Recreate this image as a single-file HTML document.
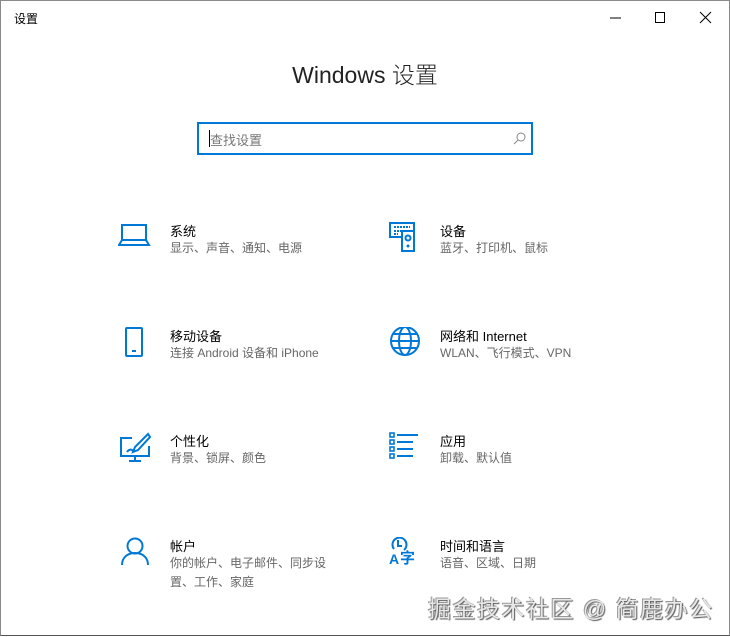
<!DOCTYPE html>
<html><head><meta charset="utf-8"><style>
*{margin:0;padding:0;box-sizing:border-box}
body{width:730px;height:637px;background:#fff;font-family:"Liberation Sans","Noto Sans CJK SC",sans-serif;position:relative;overflow:hidden}
.win{position:absolute;left:0;top:0;width:730px;height:636px;border:1px solid #8a8a8a;border-bottom-color:#555}
.t{position:absolute;font-size:12px;color:#000}
.h{position:absolute;left:0;width:730px;top:56px;text-align:center;font-size:23px;color:#222;font-weight:300}
.s{position:absolute;left:197px;top:122px;width:336px;height:33px;border:2px solid #0078d7}
.s span{position:absolute;left:11px;top:6px;font-size:13px;color:#777}
.s i{position:absolute;left:10px;top:6px;width:1px;height:17px;background:#000}
.it{position:absolute}
.it b{position:absolute;left:52px;top:-1px;font-weight:normal;font-size:13px;color:#000;white-space:nowrap}
.it p{position:absolute;left:52px;top:17px;font-size:12px;color:#666;line-height:19px;width:180px}
svg{position:absolute;left:0;top:0}
.wm{position:absolute;left:428px;top:590px;font-size:23px;color:#e8e8e8;text-shadow:1px 1px 1px #555,-1px -1px 0 #999;letter-spacing:1.5px;white-space:nowrap}
</style></head><body>
<div class="win"></div>
<div class="t" style="left:14px;top:10px">设置</div>
<svg style="left:600px;top:10px" width="120" height="16"><path d="M10 8h11" stroke="#000"/><rect x="55.5" y="2.5" width="9" height="10" fill="none" stroke="#000"/><path d="M100 2l11 11M111 2l-11 11" stroke="#000"/></svg>
<div class="h">Windows 设置</div>
<div class="s"><i></i><span>查找设置</span>
<svg style="left:314px;top:8px" width="14" height="14"><circle cx="8" cy="5" r="4" fill="none" stroke="#888"/><path d="M5 8L1 12" stroke="#888"/></svg></div>

<div class="it" style="left:118px;top:222px"><svg width="34" height="26"><rect x="4" y="3" width="24" height="15" fill="none" stroke="#0078d7" stroke-width="2"/><path d="M4 18L1 23h30l-3-5" fill="none" stroke="#0078d7" stroke-width="2"/></svg><b>系统</b><p>显示、声音、通知、电源</p></div>
<div class="it" style="left:388px;top:222px"><svg width="34" height="32"><rect x="2" y="1" width="24" height="14" fill="none" stroke="#0078d7" stroke-width="2"/><path d="M6 5h16M6 9h10M6 12h4" stroke="#0078d7" stroke-width="2" stroke-dasharray="2 1"/><rect x="14" y="9" width="12" height="20" fill="#fff" stroke="#0078d7" stroke-width="2"/><circle cx="20" cy="16" r="2.5" fill="none" stroke="#0078d7" stroke-width="2"/><circle cx="20" cy="24" r="1.5" fill="#0078d7"/></svg><b>设备</b><p>蓝牙、打印机、鼠标</p></div>

<div class="it" style="left:118px;top:327px"><svg width="34" height="32"><rect x="8" y="1" width="16" height="28" rx="1" fill="none" stroke="#0078d7" stroke-width="2"/><path d="M14 24h4" stroke="#0078d7" stroke-width="2"/></svg><b>移动设备</b><p>连接 Android 设备和 iPhone</p></div>
<div class="it" style="left:388px;top:327px"><svg width="34" height="34"><circle cx="17" cy="14" r="14" fill="none" stroke="#0078d7" stroke-width="2"/><ellipse cx="17" cy="14" rx="6" ry="14" fill="none" stroke="#0078d7" stroke-width="2"/><path d="M3 14h28M5 7h24M5 21h24" stroke="#0078d7" stroke-width="2"/></svg><b>网络和 Internet</b><p>WLAN、飞行模式、VPN</p></div>

<div class="it" style="left:118px;top:432px"><svg width="34" height="34"><path d="M14 6H3v18h28V14" fill="none" stroke="#0078d7" stroke-width="2"/><path d="M17 24v4M11 29h12" stroke="#0078d7" stroke-width="2"/><path d="M30 2L17 15l-2 5 5-2L32 5z" fill="none" stroke="#0078d7" stroke-width="2"/><path d="M9 20c2-3 5-3 6-1" fill="none" stroke="#0078d7" stroke-width="2"/></svg><b>个性化</b><p>背景、锁屏、颜色</p></div>
<div class="it" style="left:388px;top:432px"><svg width="34" height="34"><g fill="none" stroke="#0078d7" stroke-width="1.6"><rect x="2" y="1" width="4" height="4"/><rect x="2" y="8" width="4" height="4"/><rect x="2" y="15" width="4" height="4"/><rect x="2" y="22" width="4" height="4"/></g><path d="M9 3h21M9 10h16M9 17h16M9 24h16" stroke="#0078d7" stroke-width="2"/></svg><b>应用</b><p>卸载、默认值</p></div>

<div class="it" style="left:118px;top:537px"><svg width="34" height="34"><circle cx="17" cy="9" r="7.5" fill="none" stroke="#0078d7" stroke-width="2"/><path d="M4 28c0-8 6-12 13-12s13 4 13 12" fill="none" stroke="#0078d7" stroke-width="2"/></svg><b>帐户</b><p style="width:160px;word-break:break-all">你的帐户、电子邮件、同步设置、工作、家庭</p></div>
<div class="it" style="left:388px;top:537px"><svg width="34" height="34"><path d="M6 12A7 7 0 1 1 16 13" fill="none" stroke="#0078d7" stroke-width="2"/><path d="M10 3v6h4" fill="none" stroke="#0078d7" stroke-width="2"/><text x="1" y="27" font-family="Liberation Sans" font-weight="bold" font-size="14" fill="#0078d7">A</text><text x="12" y="26" font-family="Noto Sans CJK SC" font-weight="bold" font-size="15" fill="#0078d7">字</text></svg><b>时间和语言</b><p>语音、区域、日期</p></div>

<div class="wm">掘金技术社区 @ 简鹿办公</div>
</body></html>
